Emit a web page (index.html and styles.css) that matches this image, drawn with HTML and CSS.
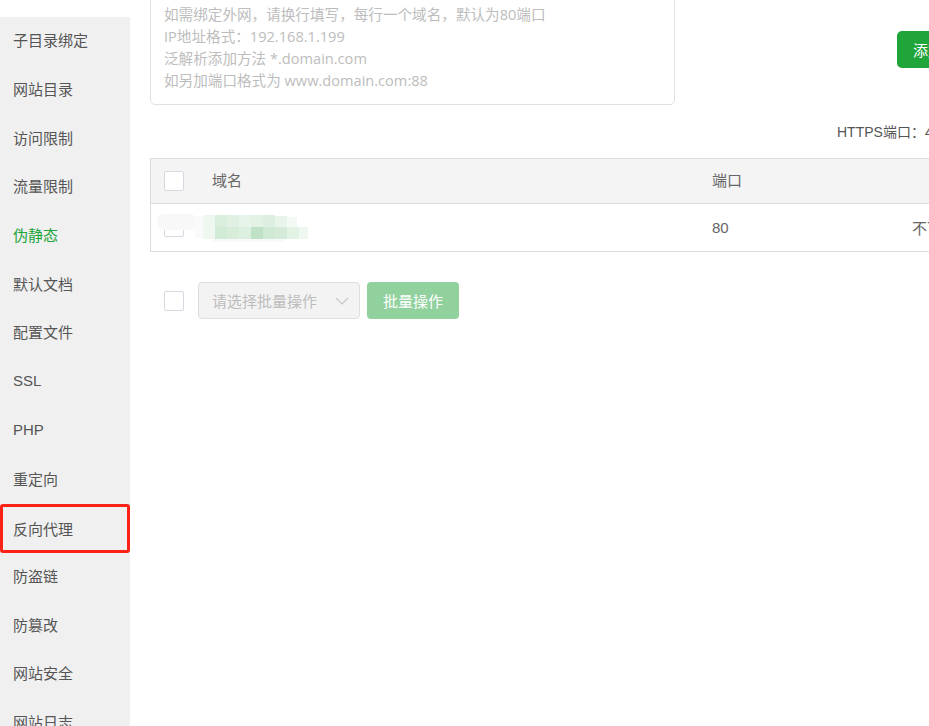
FILE: index.html
```html
<!DOCTYPE html>
<html lang="zh-CN">
<head>
<meta charset="utf-8">
<title>站点修改</title>
<link rel="stylesheet" href="styles.css">
</head>
<body>
<div class="page">
  <aside class="sidebar">
    <div class="nav-item">子目录绑定</div>
    <div class="nav-item">网站目录</div>
    <div class="nav-item">访问限制</div>
    <div class="nav-item">流量限制</div>
    <div class="nav-item active">伪静态</div>
    <div class="nav-item">默认文档</div>
    <div class="nav-item">配置文件</div>
    <div class="nav-item">SSL</div>
    <div class="nav-item">PHP</div>
    <div class="nav-item">重定向</div>
    <div class="nav-item marked">反向代理</div>
    <div class="nav-item">防盗链</div>
    <div class="nav-item">防篡改</div>
    <div class="nav-item">网站安全</div>
    <div class="nav-item">网站日志</div>
  </aside>
  <main class="main">
    <div class="top-row">
      <div class="textarea">
        <div>如需绑定外网，请换行填写，每行一个域名，默认为80端口</div>
        <div>IP地址格式：192.168.1.199</div>
        <div>泛解析添加方法 *.domain.com</div>
        <div>如另加端口格式为 www.domain.com:88</div>
      </div>
      <button class="btn-add">添加</button>
    </div>
    <div class="https-row">HTTPS端口：443</div>
    <div class="table">
      <div class="tr thead">
        <div class="td"><span class="checkbox"></span></div>
        <div class="td">域名</div>
        <div class="td">端口</div>
        <div class="td"></div>
      </div>
      <div class="tr">
        <div class="td"><span class="checkbox"></span></div>
        <div class="td"></div>
        <div class="td">80</div>
        <div class="td">不可删除</div>
        <svg class="blur" width="160" height="34" viewBox="0 0 160 34">
          <rect x="2" y="2" width="40" height="16" rx="7" fill="#f8f8f8"/>
          <rect x="40" y="4" width="10" height="22" rx="3" fill="#fafafa"/>
          <rect x="48" y="3" width="12" height="12" fill="#eef7f0"/>
          <rect x="60" y="3" width="12" height="12" fill="#d9eedd"/>
          <rect x="72" y="3" width="12" height="12" fill="#e0f1e3"/>
          <rect x="84" y="3" width="12" height="12" fill="#e6f4e9"/>
          <rect x="96" y="3" width="12" height="12" fill="#e2f2e5"/>
          <rect x="108" y="3" width="12" height="12" fill="#dcefe0"/>
          <rect x="120" y="4" width="12" height="11" fill="#e9f5eb"/>
          <rect x="132" y="5" width="10" height="10" fill="#f3faf4"/>
          <rect x="48" y="15" width="12" height="12" fill="#eef7f0"/>
          <rect x="60" y="15" width="12" height="12" fill="#d2ebd7"/>
          <rect x="72" y="15" width="12" height="12" fill="#d7edda"/>
          <rect x="84" y="15" width="12" height="12" fill="#ddefe0"/>
          <rect x="96" y="15" width="12" height="12" fill="#bfe2c7"/>
          <rect x="108" y="15" width="12" height="12" fill="#d0e9d5"/>
          <rect x="120" y="15" width="12" height="12" fill="#d5ebd9"/>
          <rect x="132" y="15" width="12" height="12" fill="#e2f2e5"/>
          <rect x="144" y="15" width="9" height="12" fill="#eef7f0"/>
          <rect x="58" y="27" width="70" height="3" rx="1" fill="#f9f9f9"/>
        </svg>
      </div>
    </div>
    <div class="batch-row">
      <span class="checkbox"></span>
      <div class="select">
        <span>请选择批量操作</span>
        <svg width="14" height="8" viewBox="0 0 14 8"><path d="M1 1 L7 7 L13 1" fill="none" stroke="#c8c8c8" stroke-width="1.2"/></svg>
      </div>
      <button class="btn-batch">批量操作</button>
    </div>
  </main>
</div>
</body>
</html>
```

FILE: styles.css
```css
* { box-sizing: border-box; }
html, body {
  margin: 0;
  padding: 0;
  background: #fff;
}
body {
  font-family: "Liberation Sans", "Noto Sans CJK SC", sans-serif;
  color: #666;
  font-size: 14px;
}
.page {
  display: flex;
  width: 929px;
  height: 726px;
  overflow: hidden;
}
.sidebar {
  flex: 0 0 130px;
  margin-top: 17px;
  background: #f0f0f0;
  display: flex;
  flex-direction: column;
}
.nav-item {
  height: 48.7px;
  flex: 0 0 48.7px;
  display: flex;
  align-items: center;
  padding-left: 13px;
  padding-bottom: 3px;
  font-size: 15px;
  color: #555;
}
.nav-item.active { color: #20a53a; }
.nav-item.marked {
  border: 3px solid #fd2217;
  border-radius: 3px;
  padding-left: 10px;
  padding-bottom: 0;
}
.main {
  flex: 0 0 880px;
  padding-left: 20px;
  display: flex;
  flex-direction: column;
}
.top-row {
  display: flex;
  align-items: flex-start;
  margin-top: -10px;
}
.textarea {
  width: 525px;
  height: 115px;
  border: 1px solid #e0e0e6;
  border-radius: 5px;
  padding: 12px 13px 0;
  color: #bdbdbd;
  font-family: "Open Sans", "Noto Sans CJK SC", sans-serif;
  font-size: 14.6px;
  line-height: 22px;
}
.btn-add {
  margin-left: 222px;
  margin-top: 41px;
  height: 37px;
  width: 70px;
  background: #20a53a;
  color: #fff;
  border: none;
  border-radius: 5px;
  font-family: inherit;
  font-size: 15px;
  text-align: left;
  padding-left: 16px;
}
.https-row {
  margin-top: 16px;
  padding-left: 687px;
  height: 22px;
  line-height: 22px;
  white-space: nowrap;
  font-size: 14px;
  color: #555;
}
.table {
  margin-top: 15px;
  width: 860px;
  border: 1px solid #ddd;
}
.tr {
  display: grid;
  grid-template-columns: 48px 500px 200px 1fr;
  height: 47px;
  align-items: center;
  background: #fff;
  position: relative;
}
.tr.thead {
  background: #f4f4f4;
  height: 45px;
  border-bottom: 1px solid #ddd;
}
.tr.thead .td { padding-bottom: 3px; }
.tr.thead .td:first-child { padding-bottom: 0; }
.td {
  padding-left: 13px;
  padding-bottom: 1px;
  white-space: nowrap;
  font-size: 15px;
  color: #666;
}
.tr .td:last-child { padding-left: 14px; }
.checkbox {
  display: block;
  width: 20px;
  height: 20px;
  border: 1px solid #d8d8e0;
  border-radius: 2px;
  background: #fff;
}
.blur {
  position: absolute;
  left: 4px;
  top: 8px;
}
.batch-row {
  margin-top: 30px;
  display: flex;
  align-items: center;
  padding-left: 14px;
}
.batch-row .checkbox { margin-right: 14px; }
.select {
  width: 162px;
  height: 37px;
  background: #f3f3f3;
  border: 1px solid #dedede;
  border-radius: 4px;
  display: flex;
  align-items: center;
  justify-content: space-between;
  padding: 0 10px 0 13px;
  color: #bdbdbd;
  font-size: 15px;
}
.btn-batch {
  margin-left: 7px;
  width: 92px;
  height: 37px;
  background: #90d19e;
  color: #fff;
  border: none;
  border-radius: 4px;
  font-family: inherit;
  font-size: 15px;
}
```
